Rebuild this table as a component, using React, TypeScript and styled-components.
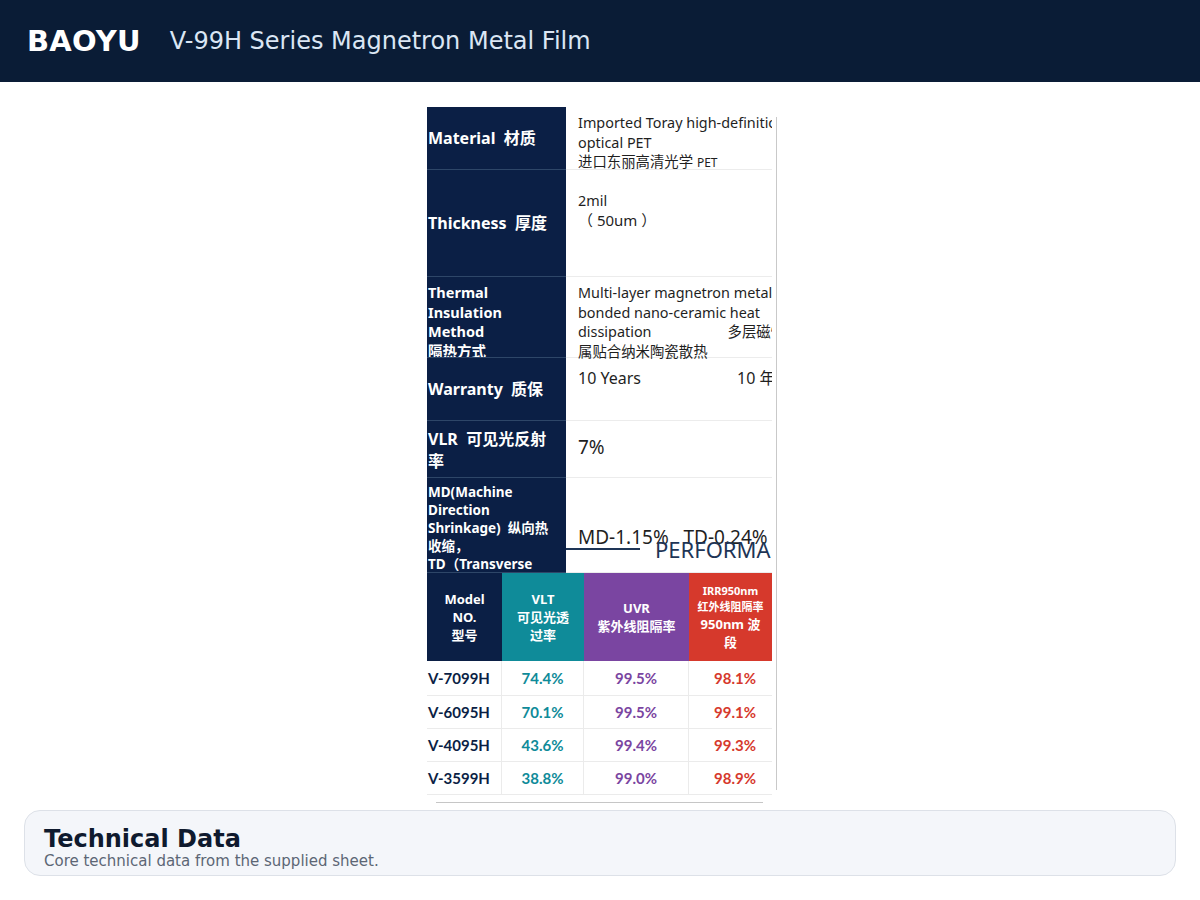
import styled, { createGlobalStyle } from 'styled-components';

const NAVY = '#0b1f45';
const TEAL = '#0f8b99';
const PURPLE = '#7a45a1';
const RED = '#d6392c';

const GlobalStyle = createGlobalStyle`
  body {
    margin: 0;
    background: #ffffff;
    font-family: 'DejaVu Sans', sans-serif;
  }
`;

const PERF_ROWS = [
  { model: 'V-7099H', vlt: '74.4%', uvr: '99.5%', irr: '98.1%', h: 35 },
  { model: 'V-6095H', vlt: '70.1%', uvr: '99.5%', irr: '99.1%', h: 33 },
  { model: 'V-4095H', vlt: '43.6%', uvr: '99.4%', irr: '99.3%', h: 33 },
  { model: 'V-3599H', vlt: '38.8%', uvr: '99.0%', irr: '98.9%', h: 33 },
];

function App() {
  return (
    <Page>
      <GlobalStyle />
      <Header>
        <Brand>BAOYU</Brand>
        <Subtitle>V-99H Series Magnetron Metal Film</Subtitle>
      </Header>
      <Main>
        <SheetFrame>
          <Sheet>
            <Row height={63}>
              <Label size={16} line={20}>Material&nbsp; 材质</Label>
              <Value top={6}>
                <Line>Imported Toray high-definition</Line>
                <Line>optical PET</Line>
                <Line>进口东丽高清光学 <Small>PET</Small></Line>
              </Value>
            </Row>
            <Row height={107}>
              <Label size={16} line={20}>Thickness&nbsp; 厚度</Label>
              <Value top={21}>
                <Line>2mil</Line>
                <Line size={15}>（ 50um ）</Line>
              </Value>
            </Row>
            <Row height={81}>
              <Label size={14.5} line={19.5} top={6}>
                Thermal<br />Insulation<br />Method<br />隔热方式
              </Label>
              <Value top={6}>
                <Line>Multi-layer magnetron metal</Line>
                <Line>bonded nano-ceramic heat</Line>
                <Line>dissipation<Gap w={76} />多层磁性金</Line>
                <Line>属贴合纳米陶瓷散热</Line>
              </Value>
            </Row>
            <Row height={63}>
              <Label size={16} line={20}>Warranty&nbsp; 质保</Label>
              <Value top={11} size={16}>
                <Line>10 Years<Gap w={96} />10 年</Line>
              </Value>
            </Row>
            <Row height={57}>
              <Label size={16} line={22} top={7}>
                VLR&nbsp; 可见光反射<br />率
              </Label>
              <Value top={17} size={19}>
                <Line>7%</Line>
              </Value>
            </Row>
            <Row height={95}>
              <Label size={13.5} line={18} top={5}>
                MD(Machine<br />Direction<br />Shrinkage)&nbsp; 纵向热<br />收缩，<br />TD（Transverse
              </Label>
              <Value top={50} size={19}>
                <Line>MD-1.15%&nbsp;&nbsp; TD-0.24%</Line>
                <Overlay>
                  <Rule />
                  <Heading>PERFORMANCE</Heading>
                </Overlay>
              </Value>
            </Row>
            <PerfHead>
              <HeadCell bg={NAVY}>Model<br />NO.<br />型号</HeadCell>
              <HeadCell bg={TEAL}>VLT<br />可见光透<br />过率</HeadCell>
              <HeadCell bg={PURPLE}>UVR<br />紫外线阻隔率</HeadCell>
              <HeadCell bg={RED}>
                <Tiny>IRR950nm</Tiny>
                <Tiny>红外线阻隔率</Tiny>
                950nm 波<br />段
              </HeadCell>
            </PerfHead>
            {PERF_ROWS.map((r) => (
              <PerfRow key={r.model} height={r.h}>
                <ModelCell>{r.model}</ModelCell>
                <DataCell color={TEAL}>{r.vlt}</DataCell>
                <DataCell color={PURPLE}>{r.uvr}</DataCell>
                <DataCell color={RED} shift={9}>{r.irr}</DataCell>
              </PerfRow>
            ))}
            <BottomRule />
          </Sheet>
          <EdgeLine />
        </SheetFrame>
      </Main>
      <Footer>
        <FooterTitle>Technical Data</FooterTitle>
        <FooterText>Core technical data from the supplied sheet.</FooterText>
      </Footer>
    </Page>
  );
}

const Page = styled.div`
  display: flex;
  flex-direction: column;
  min-height: 900px;
`;

const Header = styled.header`
  height: 82px;
  background: #0a1c36;
  display: flex;
  align-items: center;
  padding: 0 27px;
  gap: 29px;
`;

const Brand = styled.div`
  color: #ffffff;
  font-weight: 700;
  font-size: 29px;
  letter-spacing: 0.2px;
`;

const Subtitle = styled.div`
  color: #dbe6f4;
  font-size: 24px;
`;

const Main = styled.main`
  display: flex;
  justify-content: center;
  padding-top: 25px;
`;

const SheetFrame = styled.div`
  display: flex;
  width: 351px;
  margin-left: 5px;
`;

const Sheet = styled.div`
  width: 345px;
  display: flex;
  flex-direction: column;
  font-family: 'Noto Sans', 'Noto Sans CJK SC', sans-serif;
`;

const EdgeLine = styled.div`
  width: 1px;
  background: #c9c9c9;
  margin: 10px 0 13px 4px;
`;

const Row = styled.div<{ height: number }>`
  display: grid;
  grid-template-columns: 139px 206px;
  grid-template-rows: ${(p) => p.height}px;
  height: ${(p) => p.height}px;
`;

const Label = styled.div<{ size: number; line: number; top?: number }>`
  background: ${NAVY};
  color: #ffffff;
  font-weight: 700;
  font-size: ${(p) => p.size}px;
  line-height: ${(p) => p.line}px;
  padding: ${(p) => (p.top !== undefined ? `${p.top}px 0 0 1px` : '0 0 0 1px')};
  display: flex;
  flex-direction: column;
  justify-content: ${(p) => (p.top !== undefined ? 'flex-start' : 'center')};
  border-bottom: 1px solid #2e4668;
  overflow: hidden;
  box-sizing: border-box;
  white-space: nowrap;
`;

const Value = styled.div<{ top: number; size?: number }>`
  position: relative;
  min-height: 0;
  padding: ${(p) => p.top}px 0 0 12px;
  font-size: ${(p) => p.size ?? 14.4}px;
  line-height: 19.5px;
  color: #1f1f1f;
  border-bottom: 1px solid #ececec;
  overflow-x: clip;
  overflow-y: visible;
  box-sizing: border-box;
`;

const Line = styled.div<{ size?: number }>`
  white-space: nowrap;
  height: 19.5px;
  ${(p) => (p.size ? `font-size: ${p.size}px;` : '')}
`;

const Small = styled.span`
  font-size: 12px;
`;

const Gap = styled.span<{ w: number }>`
  display: inline-block;
  width: ${(p) => p.w}px;
`;

const Overlay = styled.div`
  position: absolute;
  left: 0;
  top: 58px;
  display: flex;
  align-items: center;
  gap: 15px;
`;

const Rule = styled.div`
  width: 74px;
  height: 2px;
  background: #1e3556;
`;

const Heading = styled.div`
  font-size: 22px;
  line-height: 26px;
  color: #1e3556;
  white-space: nowrap;
`;

const PerfHead = styled.div`
  display: grid;
  grid-template-columns: 75px 82px 105px 83px;
  height: 88px;
`;

const HeadCell = styled.div<{ bg: string }>`
  background: ${(p) => p.bg};
  color: #ffffff;
  font-weight: 700;
  font-size: 13px;
  line-height: 18px;
  text-align: center;
  display: flex;
  flex-direction: column;
  justify-content: center;
`;

const Tiny = styled.div`
  font-size: 11px;
  line-height: 16px;
`;

const PerfRow = styled.div<{ height: number }>`
  display: grid;
  grid-template-columns: 75px 82px 105px 83px;
  height: ${(p) => p.height}px;
  font-family: Lato, 'Noto Sans', sans-serif;
  font-weight: 700;
  font-size: 15px;
  border-bottom: 1px solid #ebebeb;
  box-sizing: border-box;
`;

const ModelCell = styled.div`
  display: flex;
  align-items: center;
  padding-left: 1px;
  color: ${NAVY};
  border-right: 1px solid #ebebeb;
`;

const DataCell = styled.div<{ color: string; shift?: number }>`
  display: flex;
  align-items: center;
  justify-content: center;
  padding-left: ${(p) => p.shift ?? 0}px;
  color: ${(p) => p.color};
  border-right: 1px solid #ebebeb;
  &:last-child {
    border-right: none;
  }
`;

const BottomRule = styled.div`
  height: 1px;
  background: #c6c6c6;
  margin: 7px 9px 0 9px;
`;

const Footer = styled.section`
  margin: 7px 24px 0 24px;
  height: 66px;
  box-sizing: border-box;
  background: #f4f6fa;
  border: 1px solid #dde1e8;
  border-radius: 16px;
  padding: 14px 19px 0 19px;
`;

const FooterTitle = styled.div`
  font-size: 24px;
  font-weight: 700;
  color: #0f1a2e;
  line-height: 28px;
`;

const FooterText = styled.div`
  font-size: 15px;
  color: #5c6675;
  line-height: 16px;
`;

export default App;
